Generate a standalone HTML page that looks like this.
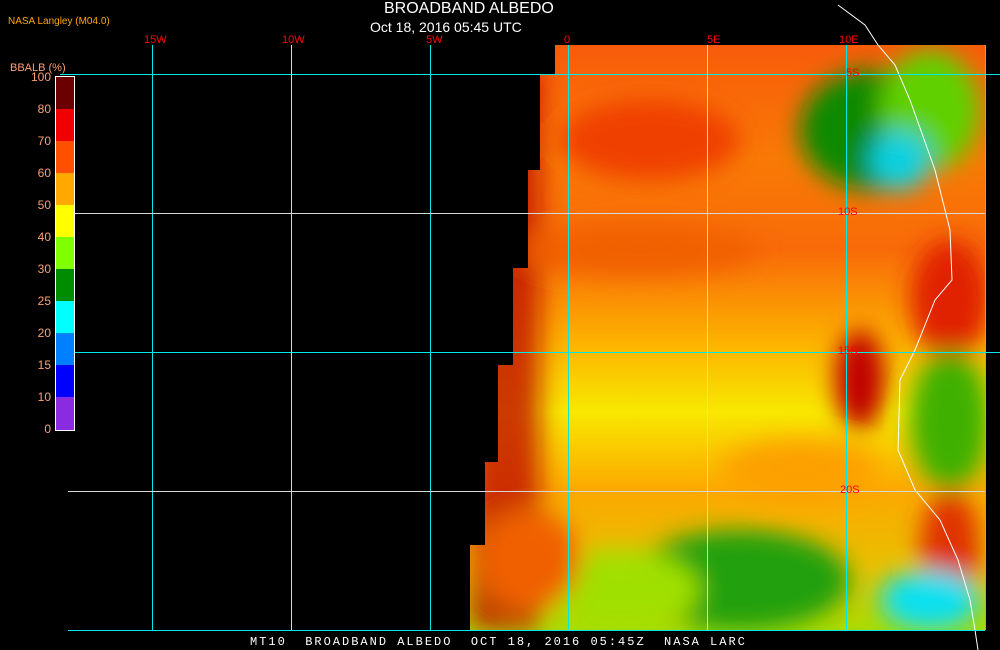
<!DOCTYPE html>
<html><head><style>
html,body{margin:0;padding:0;background:#000;width:1000px;height:650px;overflow:hidden;font-family:"Liberation Sans",sans-serif}
.t{position:absolute;white-space:nowrap}
</style></head><body>
<svg width="1000" height="650" style="position:absolute;left:0;top:0">
<defs>
<clipPath id="c"><polygon points="555,45 985,45 985,630 470,630 470,545 485,545 485,462 498,462 498,365 513,365 513,268 528,268 528,170 540,170 540,75 555,75"/></clipPath>
<linearGradient id="g" x1="0" y1="0" x2="0" y2="1">
<stop offset="0" stop-color="#f85a0a"/><stop offset="0.2" stop-color="#f87a05"/><stop offset="0.35" stop-color="#f86a08"/><stop offset="0.5" stop-color="#fcb000"/><stop offset="0.62" stop-color="#f8e800"/><stop offset="0.75" stop-color="#fca800"/><stop offset="0.88" stop-color="#e8c000"/><stop offset="1" stop-color="#a0e000"/>
</linearGradient>
<filter id="b"><feGaussianBlur stdDeviation="12"/></filter>
</defs>
<g clip-path="url(#c)">
<rect x="460" y="40" width="530" height="600" fill="url(#g)"/>
<g filter="url(#b)">
<rect x="470" y="70" width="70" height="560" fill="#c01000" opacity="0.8"/>
<ellipse cx="650" cy="140" rx="90" ry="40" fill="#f04000"/>
<ellipse cx="870" cy="130" rx="70" ry="60" fill="#108a00"/>
<ellipse cx="930" cy="110" rx="50" ry="60" fill="#60d000"/>
<ellipse cx="900" cy="160" rx="30" ry="30" fill="#10d0e0"/>
<ellipse cx="950" cy="300" rx="40" ry="60" fill="#e02000"/>
<ellipse cx="860" cy="380" rx="25" ry="50" fill="#c00000"/>
<ellipse cx="950" cy="420" rx="40" ry="70" fill="#40b000"/>
<ellipse cx="950" cy="550" rx="30" ry="60" fill="#e03000"/>
<ellipse cx="800" cy="470" rx="80" ry="30" fill="#fca000"/>
<ellipse cx="740" cy="580" rx="110" ry="50" fill="#20a010"/>
<ellipse cx="620" cy="590" rx="80" ry="40" fill="#a0e000"/>
<ellipse cx="930" cy="600" rx="50" ry="30" fill="#10e0f0"/>
<ellipse cx="530" cy="560" rx="50" ry="50" fill="#f06000"/>
<ellipse cx="640" cy="250" rx="120" ry="25" fill="#f06000"/>
</g>
</g>
<polyline points="838,5 865,25 878,45 895,65 910,100 935,170 950,230 952,280 935,300 915,350 900,380 898,450 915,490 940,520 958,560 970,600 975,630 978,650" fill="none" stroke="#fff" stroke-width="1"/>
<g stroke="#00e8e8" stroke-width="1" shape-rendering="crispEdges">
<line x1="60" y1="74.5" x2="1000" y2="74.5"/><line x1="68" y1="352.5" x2="1000" y2="352.5"/><line x1="68" y1="630.5" x2="985" y2="630.5"/>
<line x1="152.5" y1="45" x2="152.5" y2="630"/><line x1="430.5" y1="45" x2="430.5" y2="630"/><line x1="568.5" y1="45" x2="568.5" y2="630"/><line x1="846.5" y1="45" x2="846.5" y2="630"/><line x1="985.5" y1="45" x2="985.5" y2="630"/>
</g>
<g stroke="#d8d8d8" stroke-width="1" shape-rendering="crispEdges">
<line x1="68" y1="213.5" x2="985" y2="213.5"/><line x1="68" y1="491.5" x2="985" y2="491.5"/>
<line x1="291.5" y1="45" x2="291.5" y2="630"/><line x1="707.5" y1="45" x2="707.5" y2="630"/>
</g>
<g shape-rendering="crispEdges">
<rect x="56" y="77" width="18" height="32" fill="#6a0000"/><rect x="56" y="109" width="18" height="32" fill="#f00000"/><rect x="56" y="141" width="18" height="32" fill="#ff5000"/><rect x="56" y="173" width="18" height="32" fill="#ffa800"/><rect x="56" y="205" width="18" height="32" fill="#ffff00"/><rect x="56" y="237" width="18" height="32" fill="#80ff00"/><rect x="56" y="269" width="18" height="32" fill="#008c00"/><rect x="56" y="301" width="18" height="32" fill="#00ffff"/><rect x="56" y="333" width="18" height="32" fill="#0080ff"/><rect x="56" y="365" width="18" height="32" fill="#0000ff"/><rect x="56" y="397" width="18" height="33" fill="#8a2be2"/>
<rect x="55.5" y="76.5" width="19" height="354" fill="none" stroke="#fff"/>
</g>
</svg>
<div class="t" style="left:384px;top:0px;color:#fff;font-size:16px">BROADBAND ALBEDO</div>
<div class="t" style="left:370px;top:19px;color:#fff;font-size:14px">Oct 18, 2016 05:45 UTC</div>
<div class="t" style="left:8px;top:16px;color:#ffa500;font-size:10px">NASA Langley (M04.0)</div>
<div class="t" style="left:10px;top:62px;color:#ffa070;font-size:11px">BBALB (%)</div>
<div style="position:absolute;left:0;top:61px;width:51px;color:#ffa070;font-size:12px;text-align:right;line-height:32px">100<br>80<br>70<br>60<br>50<br>40<br>30<br>25<br>20<br>15<br>10<br>0</div>
<div class="t" style="left:144px;top:34px;color:#f00;font-size:11px">15W</div>
<div class="t" style="left:282px;top:34px;color:#f00;font-size:11px">10W</div>
<div class="t" style="left:426px;top:34px;color:#f00;font-size:11px">5W</div>
<div class="t" style="left:564px;top:34px;color:#f00;font-size:11px">0</div>
<div class="t" style="left:707px;top:34px;color:#f00;font-size:11px">5E</div>
<div class="t" style="left:839px;top:34px;color:#f00;font-size:11px">10E</div>
<div class="t" style="left:846px;top:67px;color:#f00;font-size:11px">5S</div>
<div class="t" style="left:838px;top:206px;color:#f00;font-size:11px">10S</div>
<div class="t" style="left:838px;top:345px;color:#f00;font-size:11px">15S</div>
<div class="t" style="left:840px;top:484px;color:#f00;font-size:11px">20S</div>
<div class="t" style="left:250px;top:635px;color:#fff;font-size:12px;letter-spacing:2px;white-space:pre;font-family:'Liberation Mono',monospace">MT10  BROADBAND ALBEDO  OCT 18, 2016 05:45Z  NASA LARC</div>
</body></html>
